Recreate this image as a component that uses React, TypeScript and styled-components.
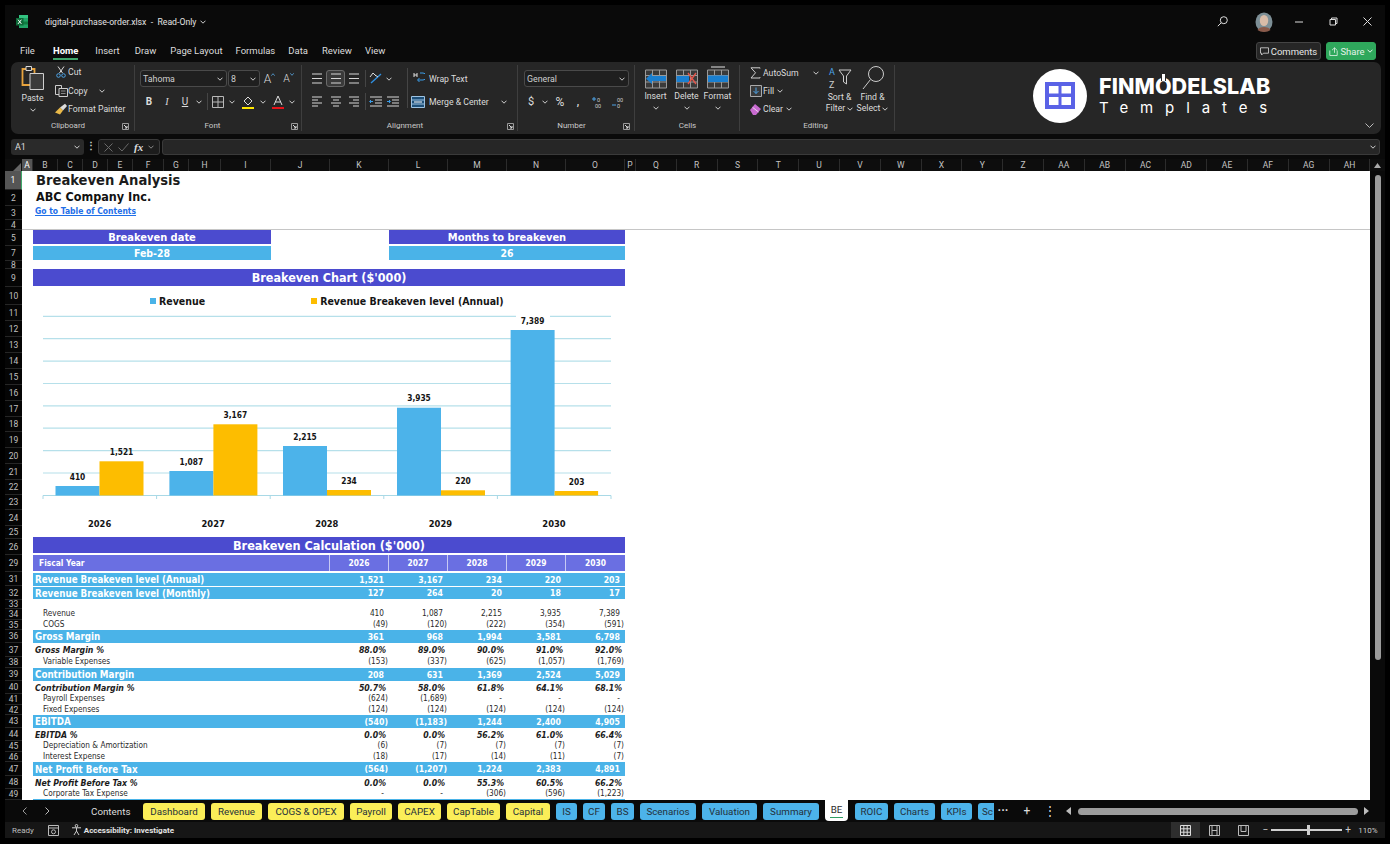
import React from "react";
import styled, { createGlobalStyle } from "styled-components";

const UI = `Roboto, "Noto Sans", sans-serif`;
const SHEET = `"DejaVu Sans Condensed", "DejaVu Sans", "Noto Sans", sans-serif`;
const LINE = "#d6d6d6";

const Global = createGlobalStyle`
  html, body { margin: 0; padding: 0; background: #000; overflow: hidden; }
  * { box-sizing: border-box; }
`;

const Frame = styled.div`
  width: 1390px; height: 844px; background: #000; padding: 5px 5px 6px;
  font-family: ${UI}; color: #e4e4e4; overflow: hidden;
`;
const Win = styled.div`
  height: 833px; background: #0a0a0a; display: flex; flex-direction: column;
`;

/* title bar */
const TitleBar = styled.header`
  height: 35px; display: flex; align-items: center; padding: 0 0 2px 11px; flex: none;
`;
const FileName = styled.span`
  margin-left: 17px; font-size: 8.7px; color: #e2e2e2; display: flex; align-items: center; gap: 4px;
`;
const TitleRight = styled.div`
  margin-left: auto; display: flex; align-items: center;
`;
const WinBtn = styled.span<{ $w: number }>`
  width: ${(p) => p.$w}px; display: flex; justify-content: center; align-items: center;
`;

/* menu */
const MenuBar = styled.nav`
  height: 22px; display: flex; align-items: center; padding-left: 15px; flex: none;
`;
const MenuItem = styled.span<{ $active?: boolean; $gap: number }>`
  font-size: 9.5px; margin-right: ${(p) => p.$gap}px; position: relative; height: 18px; line-height: 18px;
  font-weight: ${(p) => (p.$active ? 700 : 400)}; color: ${(p) => (p.$active ? "#fff" : "#dcdcdc")};
  border-bottom: ${(p) => (p.$active ? "2px solid #3fa76a" : "none")};
`;
const MenuRight = styled.div`
  margin-left: auto; display: flex; gap: 5px; padding-right: 9px;
`;
const CommentBtn = styled.button`
  width: 65px; height: 18px; background: #262626; border: 1px solid #444; border-radius: 3px; color: #e6e6e6;
  font: 9.5px ${UI}; display: flex; align-items: center; justify-content: center; gap: 2px; padding: 0;
`;
const ShareBtn = styled(CommentBtn)`
  width: 50px; background: #2fa85c; border-color: #2fa85c; color: #e4f3e9;
`;

/* ribbon */
const Ribbon = styled.section`
  height: 72px; margin: 0 4px 0 6px; background: #262626; border-radius: 7px; display: flex; flex: none;
`;
const Group = styled.div<{ $w: number }>`
  width: ${(p) => p.$w}px; flex: none; display: flex; flex-direction: column; position: relative;
  &::after { content: ""; position: absolute; right: 0; top: 3px; bottom: 3px; width: 1px; background: #3e3e3e; }
`;
const GroupBody = styled.div<{ $pl?: number; $pt?: number }>`
  height: 56px; display: flex; padding-left: ${(p) => p.$pl ?? 0}px; padding-top: ${(p) => p.$pt ?? 0}px;
`;
const GroupFoot = styled.div<{ $pr: number }>`
  height: 16px; display: grid; grid-template-columns: 1fr auto 1fr; align-items: center; padding-right: ${(p) => p.$pr}px;
  font-size: 8px; color: #c9c9c9; text-align: center; line-height: 14px;
`;
const Launcher = styled.span<{ $off: number }>`
  justify-self: end; margin-right: ${(p) => -p.$off}px; display: flex;
`;
const Col = styled.div<{ $w?: number; $gap?: number }>`
  display: flex; flex-direction: column; ${(p) => (p.$w ? `width:${p.$w}px;` : "")} gap: ${(p) => p.$gap ?? 0}px; flex: none;
`;
const Row = styled.div<{ $gap?: number }>`
  display: flex; align-items: center; height: 17px; gap: ${(p) => p.$gap ?? 0}px;
`;
const Cell = styled.span<{ $w: number; $on?: boolean; $fs?: number }>`
  width: ${(p) => p.$w}px; height: 17px; display: flex; align-items: center; justify-content: center; flex: none;
  font-size: ${(p) => p.$fs ?? 10}px; color: #dcdcdc;
  ${(p) => (p.$on ? "border:1px solid #6a6a6a;border-radius:3px;background:#3a3a3a;" : "")}
`;
const ItalicI = styled.i`
  font-family: "Liberation Serif", serif;
`;
const Sep = styled.span<{ $w: number; $h?: number }>`
  width: ${(p) => p.$w}px; height: ${(p) => p.$h ?? 17}px; flex: none; position: relative;
  &::after { content: ""; position: absolute; left: 50%; top: 0; bottom: 0; width: 1px; background: #454545; }
`;
const TallSep = styled(Sep)`
  margin-top: -2px;
`;
const Select = styled.span<{ $w: number }>`
  width: ${(p) => p.$w}px; height: 17px; border: 1px solid #4a4a4a; border-radius: 3px; background: #1f1f1f;
  display: flex; align-items: center; justify-content: space-between; padding: 0 3px 0 2px; font-size: 8.8px; color: #cfcfcf; flex: none;
`;
const ListItem = styled.span<{ $h?: number }>`
  height: ${(p) => p.$h ?? 18.5}px; display: flex; align-items: center; font-size: 8.7px; color: #dcdcdc; white-space: nowrap;
`;
const ListIcon = styled.span<{ $w: number }>`
  width: ${(p) => p.$w}px; display: flex; justify-content: center; flex: none;
`;
const ListChev = styled.span<{ $ml: number }>`
  margin-left: ${(p) => p.$ml}px; display: flex;
`;
const BigBtn = styled.div<{ $w: number }>`
  width: ${(p) => p.$w}px; display: flex; flex-direction: column; align-items: center; font-size: 8.7px; line-height: 11px;
  color: #dcdcdc; text-align: center; flex: none; white-space: nowrap;
`;
const BigIcon = styled.div<{ $h: number }>`
  height: ${(p) => p.$h}px; display: flex; align-items: center; justify-content: center;
`;
const Inline = styled.span`
  display: flex; align-items: center; gap: 2px;
`;
const GrowA = styled.span`
  font-size: 12px; font-weight: 300; display: flex; align-items: flex-start; line-height: 12px;
`;
const ShrinkA = styled(GrowA)`
  font-size: 10.5px;
`;
const LogoArea = styled.div`
  flex: 1; display: flex; align-items: center; padding-left: 138px; position: relative;
`;
const LogoCircle = styled.div`
  width: 54px; height: 54px; border-radius: 50%; background: #fff; display: flex; align-items: center; justify-content: center; flex: none; margin-top: -5px;
`;
const LogoText = styled.div`
  margin-left: 12px; margin-top: -3px; color: #fff; display: flex; flex-direction: column;
`;
const LogoTop = styled.span`
  font: 800 21.5px/22px Inter, "Noto Sans", sans-serif; letter-spacing: 0.1px; white-space: nowrap;
`;
const PowerO = styled.span`
  position: relative; display: inline-block;
  &::after { content: ""; position: absolute; left: 50%; top: -1px; width: 3px; height: 7px; margin-left: -2.5px; background: #fff; border: 1px solid #262626; border-width: 0 1px; box-sizing: content-box; }
`;
const LogoSub = styled.span`
  font: 400 15px/21px Inter, "Noto Sans", sans-serif; letter-spacing: 11.9px; white-space: nowrap;
`;
const RibbonEnd = styled.span`
  align-self: flex-end; margin: 0 7px 6px 0; display: flex;
`;

/* formula */
const FormulaBar = styled.div`
  height: 16px; margin: 5px 5px 0 6px; display: flex; align-items: stretch; flex: none;
`;
const NameBox = styled.div`
  width: 73px; background: #2a2a2a; border-radius: 3px; display: flex; align-items: center; justify-content: space-between;
  padding: 0 4px; font-size: 9px; color: #ddd;
`;
const Dots = styled.span`
  width: 14px; text-align: center; font-size: 10px; line-height: 14px; color: #ccc; font-weight: 700;
`;
const FormulaBtns = styled.div`
  width: 62px; border: 1px solid #3a3a3a; border-radius: 3px; background: #1c1c1c; display: flex; align-items: center; justify-content: space-around; padding: 0 2px;
`;
const FxLabel = styled.span`
  font: italic 700 11px "Liberation Serif", serif; color: #ddd;
`;
const FormulaInput = styled.div`
  flex: 1; margin-left: 2px; background: #262626; border-radius: 3px; border: 1px solid #3a3a3a; display: flex; align-items: center; justify-content: flex-end; padding-right: 3px;
`;

/* grid */
const ColHeads = styled.div`
  height: 12px; margin-top: 4px; display: flex; flex: none; background: #0d0d0d;
`;
const Corner = styled.div`
  width: 17px; display: flex; align-items: flex-end; justify-content: flex-end; flex: none; padding-right: 1px;
`;
const ColHead = styled.span<{ $w: number; $on?: boolean }>`
  width: ${(p) => p.$w}px; flex: none; text-align: center; font-size: 8.5px; line-height: 12px; color: ${(p) => (p.$on ? "#fff" : "#c4c4c4")};
  background: ${(p) => (p.$on ? "#555" : "transparent")}; border-right: 1px solid #2c2c2c;
`;
const ScrollTop = styled.span`
  width: 15px; flex: none; display: flex; align-items: center; justify-content: center;
`;
const Body = styled.div`
  height: 629px; display: flex; flex: none; overflow: hidden;
`;
const RowHeads = styled.div`
  width: 17px; flex: none; background: #000; display: flex; flex-direction: column;
`;
const RowHead = styled.span<{ $h: number; $on?: boolean }>`
  height: ${(p) => p.$h}px; flex: none; font-size: 8.5px; line-height: ${(p) => p.$h}px; text-align: center; color: ${(p) => (p.$on ? "#fff" : "#c0c0c0")};
  background: ${(p) => (p.$on ? "#555" : "#050505")}; border-bottom: 1px solid #262626;
  ${(p) => (p.$on ? "border-right:1px solid #3fa76a;" : "")}
`;
const Sheet = styled.main`
  width: 1348px; flex: none; background: #fff; font-family: ${SHEET}; font-stretch: condensed; color: #111; overflow: hidden;
`;
const VScroll = styled.aside`
  width: 15px; flex: none; background: #0a0a0a; display: flex; justify-content: center; padding-top: 4px;
`;
const VThumb = styled.span`
  width: 6px; height: 485px; background: #9c9c9c; border-radius: 3px;
`;
const Head = styled.div`
  height: 59px; padding: 0 0 0 14px; border-bottom: 1px solid #c6c6c6;
`;
const H1 = styled.div`
  font-weight: 700; font-size: 14.6px; line-height: 18px; color: #1c1c1c;
`;
const H2 = styled.div`
  font-weight: 700; font-size: 12.5px; line-height: 16px; color: #111;
`;
const TocLink = styled.a`
  font-weight: 700; font-size: 8.5px; line-height: 13px; color: #1f6fe8; text-decoration: underline; margin-left: -1px; display: block;
`;
const Content = styled.div`
  width: 592px; margin-left: 11px; display: flex; flex-direction: column;
`;
const KpiRow = styled.div`
  display: grid; grid-template-columns: 238px 118px 236px; height: 30px;
`;
const Kpi = styled.div`
  display: flex; flex-direction: column; gap: 2px;
`;
const Bar = styled.div<{ $bg: string; $h: number; $fs: number }>`
  height: ${(p) => p.$h}px; background: ${(p) => p.$bg}; color: #fff; font-weight: 700; font-size: ${(p) => p.$fs}px;
  line-height: ${(p) => p.$h + 1}px; text-align: center;
`;
const ChartTitle = styled(Bar)`
  margin-top: 9px;
`;
const Legend = styled.div`
  height: 19px; padding: 11px 0 0 117px; display: flex; align-items: center; font-weight: 700; font-size: 10.5px; color: #151515;
`;
const LegendItem = styled.span<{ $c: string; $mr: number }>`
  display: flex; align-items: center; gap: 3px; margin-right: ${(p) => p.$mr}px; white-space: nowrap;
  &::before { content: ""; width: 6px; height: 6px; background: ${(p) => p.$c}; }
`;
const ChartSvg = styled.svg`
  display: block;
`;
const Calc = styled.div`
  margin-top: 7px; display: flex; flex-direction: column;
`;
const Grid = styled.div<{ $h: number; $mt?: number; $bg?: string }>`
  display: grid; grid-template-columns: 297px repeat(5, 59px); height: ${(p) => p.$h}px; align-items: center;
  margin-top: ${(p) => p.$mt ?? 0}px; background: ${(p) => p.$bg ?? "transparent"};
`;
const FyLabel = styled.span`
  font-weight: 700; font-size: 8.4px; color: #fff; padding-left: 6px; border-right: 1px solid #c7c9f4; line-height: 16px;
`;
const FyYear = styled.span`
  font-weight: 700; font-size: 8.4px; color: #fff; text-align: center; border-right: 1px solid #c7c9f4; line-height: 16px;
  &:last-child { border-right: none; }
`;
const Label = styled.span<{ $kind: Kind }>`
  white-space: nowrap;
  ${(p) =>
    p.$kind === "band"
      ? "font-weight:700;font-size:9.7px;color:#fff;padding-left:2px;"
      : p.$kind === "pct"
      ? "font-weight:700;font-style:italic;font-size:8.7px;color:#1c1c1c;padding-left:2px;"
      : "font-size:8.2px;line-height:9px;color:#2a2a2a;padding:0 0 2px 10px;"}
`;
const Val = styled.span<{ $kind: Kind; $neg: boolean }>`
  text-align: right; white-space: nowrap;
  padding-right: ${(p) => (p.$neg ? 1 : p.$kind === "pct" ? 3 : 5)}px;
  ${(p) =>
    p.$kind === "band"
      ? "font-weight:700;font-size:8.7px;color:#fff;"
      : p.$kind === "pct"
      ? "font-weight:700;font-style:italic;font-size:8.7px;color:#1c1c1c;"
      : "font-size:8.2px;line-height:9px;padding-bottom:2px;color:#2a2a2a;"}
`;

/* sheet tabs */
const TabBar = styled.div`
  height: 22px; display: flex; align-items: center; flex: none; padding-left: 8px;
`;
const TabNav = styled.span`
  width: 23px; display: flex; justify-content: center; flex: none;
`;
const TabStrip = styled.div`
  width: 903px; display: flex; gap: 6px; overflow: hidden; align-items: flex-start; height: 22px; flex: none; margin-left: 32px;
`;
const Tab = styled.span<{ $w: number; $c: string }>`
  width: ${(p) => p.$w}px; height: 17px; margin-top: 3px; flex: none; background: ${(p) => p.$c}; color: #24303a; font-size: 9.8px; line-height: 18px;
  text-align: center; border-radius: 3px; white-space: nowrap; overflow: hidden;
`;
const PlainTab = styled(Tab)`
  color: #dcdcdc; text-align: left;
`;
const CutTab = styled(Tab)`
  text-align: left; padding-left: 4px; border-radius: 3px 0 0 3px;
`;
const ActiveTab = styled.span`
  width: 23px; height: 21px; margin-right: 1px; flex: none; background: #fff; color: #2c2c2c; font-size: 9.8px; line-height: 20px;
  text-align: center; border-radius: 0 0 4px 4px; position: relative;
  &::after { content: ""; position: absolute; left: 5px; right: 5px; bottom: 3px; height: 1.5px; background: #2f9e63; }
`;
const TabTools = styled.div`
  display: flex; align-items: center; color: #ddd; flex: none;
`;
const Tool = styled.span<{ $w: number }>`
  width: ${(p) => p.$w}px; display: flex; justify-content: center; align-items: center; font-size: 12px; line-height: 12px;
`;
const HScroll = styled.span`
  width: 280px; height: 7px; border-radius: 4px; background: #9c9c9c; flex: none;
`;

/* status */
const Status = styled.footer`
  height: 16px; background: #161616; display: flex; align-items: center; padding-left: 7px; font-size: 8px; color: #bdbdbd; flex: none;
`;
const StatusIcon = styled.span<{ $ml: number }>`
  margin-left: ${(p) => p.$ml}px; display: flex;
`;
const Access = styled.span`
  margin-left: 2px; font-weight: 700; color: #e4e4e4; font-size: 8px;
`;
const StatusRight = styled.div`
  margin-left: auto; display: flex; align-items: center; height: 16px;
`;
const ViewBtn = styled.span<{ $on?: boolean }>`
  width: 29px; height: 16px; display: flex; align-items: center; justify-content: center; background: ${(p) => (p.$on ? "#2e2e2e" : "transparent")};
`;
const Zoom = styled.div`
  display: flex; align-items: center; margin-left: 5px; gap: 3px; font-size: 10px; color: #ccc; line-height: 10px;
`;
const Slider = styled.span`
  width: 71px; height: 1.5px; background: #cfcfcf; position: relative; display: block;
  &::after { content: ""; position: absolute; left: 36px; top: -4px; width: 3px; height: 10px; background: #cfcfcf; }
`;
const Pct = styled.span`
  width: 34px; text-align: center; font-size: 8px; color: #ccc;
`;

/* icons */
const Chev = ({ c = "#cfcfcf" }: { c?: string }) => (
  <svg width="6" height="4" viewBox="0 0 6 4"><path d="M.5.7 3 3.2 5.5.7" fill="none" stroke={c} strokeWidth="1" /></svg>
);
const Launch = () => (
  <svg width="7" height="7" viewBox="0 0 7 7"><path d="M.5.5h6v6h-6z" fill="none" stroke="#9a9a9a" /><path d="M2 2l3 3M5 3v2H3" fill="none" stroke="#ddd" /></svg>
);
const Lines = ({ rows, w = 14 }: { rows: [number, number][]; w?: number }) => (
  <svg width={w} height="11" viewBox={`0 0 ${w} 11`}>
    {rows.map(([a, b], i) => (
      <path key={i} d={`M${a} ${1 + i * (9 / (rows.length - 1))}H${b}`} stroke={LINE} strokeWidth="1" />
    ))}
  </svg>
);
const TableIcon = ({ mode }: { mode: "ins" | "del" | "fmt" }) => (
  <svg width="24" height="24" viewBox="0 0 24 24">
    <path d="M1.5 4h21v18h-21z" fill="#3a3a3a" stroke="#9a9a9a" />
    <path d="M1.5 9.5h21M1.5 16h21M8.5 4v18M15.5 4v18" stroke="#9a9a9a" />
    {mode === "fmt" && <path d="M5 1h14" stroke="#c6c6c6" strokeWidth="1.2" />}
    {mode === "fmt" && <path d="M2 9.5h20v6.5H2z" fill="#1a7fd0" />}
    {mode === "ins" && <path d="M22 10H8V7l-6 5.7 6 5.3v-3h14z" fill="#1a7fd0" />}
    {mode === "del" && <path d="M1.5 10H14v6H1.5z" fill="#1a7fd0" />}
    {mode === "del" && <path d="M13 7l8 11M21 7l-8 11" stroke="#e2574c" strokeWidth="1.4" />}
  </svg>
);

type Kind = "band" | "pct" | "plain";
const rowHeads: [string, number][] = [
  ["1", 19], ["2", 16], ["3", 14], ["4", 10], ["5", 16], ["7", 15], ["8", 8], ["9", 18], ["10", 18],
  ["11", 16], ["12", 16], ["13", 16], ["14", 16], ["15", 16], ["16", 16], ["17", 16], ["18", 15], ["19", 16], ["20", 16], ["21", 16], ["22", 15], ["23", 15], ["24", 16],
  ["25", 13], ["26", 16], ["29", 17], ["31", 14], ["32", 14], ["33", 9], ["34", 11], ["35", 10], ["36", 13], ["37", 14], ["38", 11], ["39", 13],
  ["40", 13], ["41", 11], ["42", 10], ["43", 13], ["44", 13], ["45", 11], ["46", 10], ["47", 14], ["48", 13], ["49", 11],
];
const cols: [string, number][] = [
  ["B", 25], ["C", 25], ["D", 25], ["E", 25], ["F", 31], ["G", 25], ["H", 32], ["I", 50], ["J", 59], ["K", 59], ["L", 59], ["M", 59], ["N", 59], ["O", 59], ["P", 11],
  ...["Q", "R", "S", "T", "U", "V", "W", "X", "Y", "Z", "AA", "AB", "AC", "AD", "AE", "AF", "AG", "AH"].map((c) => [c, 40.8] as [string, number]),
];
const rows: { k: Kind; h: number; l: string; v: string[]; mt?: number }[] = [
  { k: "band", h: 13, mt: 2, l: "Revenue Breakeven level (Annual)", v: ["1,521", "3,167", "234", "220", "203"] },
  { k: "band", h: 12, mt: 1, l: "Revenue Breakeven level (Monthly)", v: ["127", "264", "20", "18", "17"] },
  { k: "plain", h: 11, mt: 10, l: "Revenue", v: ["410", "1,087", "2,215", "3,935", "7,389"] },
  { k: "plain", h: 10, l: "COGS", v: ["(49)", "(120)", "(222)", "(354)", "(591)"] },
  { k: "band", h: 13, l: "Gross Margin", v: ["361", "968", "1,994", "3,581", "6,798"] },
  { k: "pct", h: 14, l: "Gross Margin %", v: ["88.0%", "89.0%", "90.0%", "91.0%", "92.0%"] },
  { k: "plain", h: 11, l: "Variable Expenses", v: ["(153)", "(337)", "(625)", "(1,057)", "(1,769)"] },
  { k: "band", h: 13, l: "Contribution Margin", v: ["208", "631", "1,369", "2,524", "5,029"] },
  { k: "pct", h: 13, l: "Contribution Margin %", v: ["50.7%", "58.0%", "61.8%", "64.1%", "68.1%"] },
  { k: "plain", h: 11, l: "Payroll Expenses", v: ["(624)", "(1,689)", "-", "-", "-"] },
  { k: "plain", h: 10, l: "Fixed Expenses", v: ["(124)", "(124)", "(124)", "(124)", "(124)"] },
  { k: "band", h: 13, l: "EBITDA", v: ["(540)", "(1,183)", "1,244", "2,400", "4,905"] },
  { k: "pct", h: 13, l: "EBITDA %", v: ["0.0%", "0.0%", "56.2%", "61.0%", "66.4%"] },
  { k: "plain", h: 11, l: "Depreciation & Amortization", v: ["(6)", "(7)", "(7)", "(7)", "(7)"] },
  { k: "plain", h: 10, l: "Interest Expense", v: ["(18)", "(17)", "(14)", "(11)", "(7)"] },
  { k: "band", h: 14, l: "Net Profit Before Tax", v: ["(564)", "(1,207)", "1,224", "2,383", "4,891"] },
  { k: "pct", h: 13, l: "Net Profit Before Tax %", v: ["0.0%", "0.0%", "55.3%", "60.5%", "66.2%"] },
  { k: "plain", h: 10, l: "Corporate Tax Expense", v: ["-", "-", "(306)", "(596)", "(1,223)"] },
];
const YELLOW = "#fbee58";
const BLUE = "#4cb3ea";
const tabs: [string, number, string][] = [
  ["Dashboard", 62, YELLOW], ["Revenue", 51, YELLOW], ["COGS & OPEX", 76, YELLOW], ["Payroll", 42, YELLOW], ["CAPEX", 43, YELLOW], ["CapTable", 53, YELLOW], ["Capital", 44, YELLOW],
  ["IS", 21, BLUE], ["CF", 22, BLUE], ["BS", 23, BLUE], ["Scenarios", 56, BLUE], ["Valuation", 55, BLUE], ["Summary", 56, BLUE],
];
const tabs2: [string, number, string][] = [["ROIC", 33, BLUE], ["Charts", 41, BLUE], ["KPIs", 31, BLUE]];

const X0 = 33;
const Y0 = 305;
const bars: { x: number; w: number; top: number; c: string; v: string; ly: number }[] = [
  { x: 55.5, w: 44, top: 486, c: BLUE, v: "410", ly: 477 },
  { x: 99.5, w: 44, top: 461.3, c: "#fdbd00", v: "1,521", ly: 452 },
  { x: 169.4, w: 44, top: 471, c: BLUE, v: "1,087", ly: 461.7 },
  { x: 213.4, w: 44, top: 424.3, c: "#fdbd00", v: "3,167", ly: 415 },
  { x: 283, w: 44, top: 446, c: BLUE, v: "2,215", ly: 436.7 },
  { x: 327, w: 44, top: 490, c: "#fdbd00", v: "234", ly: 480.7 },
  { x: 397, w: 44, top: 407.7, c: BLUE, v: "3,935", ly: 397.7 },
  { x: 441, w: 44, top: 490.3, c: "#fdbd00", v: "220", ly: 481 },
  { x: 510.6, w: 44, top: 330, c: BLUE, v: "7,389", ly: 320.7 },
  { x: 554.6, w: 43.5, top: 491, c: "#fdbd00", v: "203", ly: 481.7 },
];

const Chart = () => (
  <ChartSvg width="592" height="225" viewBox={`${X0} ${Y0} 592 225`}>
    {[316.3, 338.7, 361.2, 383.5, 405.8, 428.2, 450.6, 473].map((y) => (
      <line key={y} x1="43" x2="611" y1={y} y2={y} stroke="#b6e0ea" strokeWidth="1.2" />
    ))}
    <line x1="43" x2="611" y1="495.5" y2="495.5" stroke="#a9d9e6" strokeWidth="1.2" />
    {[43, 156.6, 270.2, 383.8, 497.4, 611].map((x) => (
      <line key={x} x1={x} x2={x} y1="495.5" y2="499" stroke="#a9d9e6" />
    ))}
    <rect x="516" y="312" width="34" height="9" fill="#fff" />
    {bars.map((b) => (
      <rect key={b.v} x={b.x} y={b.top} width={b.w} height={495.5 - b.top} fill={b.c} />
    ))}
    {bars.map((b) => (
      <text key={b.v} x={b.x + 22} y={b.ly + 3} textAnchor="middle" fontSize="8.3" fontWeight="700" fill="#141414">{b.v}</text>
    ))}
    {["2026", "2027", "2028", "2029", "2030"].map((t, i) => (
      <text key={t} x={99.6 + i * 113.6} y="527" textAnchor="middle" fontSize="9.3" fontWeight="700" fill="#141414">{t}</text>
    ))}
  </ChartSvg>
);

export default function App() {
  return (
    <Frame>
      <Global />
      <Win>
        <TitleBar>
          <svg width="12" height="13" viewBox="0 0 12 13">
            <path d="M3 0h9v13H3z" fill="#21a366" /><path d="M3 0h9v3H3z" fill="#33c481" /><path d="M7 6.5h5v3H7z" fill="#107c41" />
            <path d="M0 3h7.5v7.5H0z" fill="#0e6b39" /><path d="M2 4.7l3.4 4.2M5.4 4.7 2 8.9" stroke="#fff" strokeWidth="1" />
          </svg>
          <FileName>digital-purchase-order.xlsx &nbsp;-&nbsp; Read-Only <Chev /></FileName>
          <TitleRight>
            <WinBtn $w={32}>
              <svg width="11" height="11" viewBox="0 0 11 11"><circle cx="6.8" cy="4.2" r="3.5" fill="none" stroke="#ddd" /><path d="M4.2 6.8.8 10.2" stroke="#ddd" /></svg>
            </WinBtn>
            <WinBtn $w={51}>
              <svg width="18" height="20" viewBox="0 0 18 20">
                <ellipse cx="9" cy="10" rx="8.5" ry="9.5" fill="#7d8f96" />
                <ellipse cx="9" cy="8.5" rx="4.2" ry="5.5" fill="#d9bca8" />
                <path d="M2.5 18c1.5-4 11.5-4 13 0-3 2.6-10 2.6-13 0z" fill="#8a5a4a" />
              </svg>
            </WinBtn>
            <WinBtn $w={20}><svg width="8" height="2"><path d="M0 1h8" stroke="#ddd" /></svg></WinBtn>
            <WinBtn $w={48}>
              <svg width="9" height="9" viewBox="0 0 9 9"><path d="M1 2.5h5.5V8H1z" fill="none" stroke="#ddd" /><path d="M2.5 2.5V1H8v5.5H6.5" fill="none" stroke="#ddd" /></svg>
            </WinBtn>
            <WinBtn $w={20}>
              <svg width="9" height="9" viewBox="0 0 9 9"><path d="M.5.5l8 8M8.5.5l-8 8" stroke="#ddd" /></svg>
            </WinBtn>
            <WinBtn $w={8} />
          </TitleRight>
        </TitleBar>

        <MenuBar>
          <MenuItem $gap={18}>File</MenuItem>
          <MenuItem $gap={17} $active>Home</MenuItem>
          <MenuItem $gap={15}>Insert</MenuItem>
          <MenuItem $gap={14}>Draw</MenuItem>
          <MenuItem $gap={13}>Page Layout</MenuItem>
          <MenuItem $gap={13}>Formulas</MenuItem>
          <MenuItem $gap={14}>Data</MenuItem>
          <MenuItem $gap={13}>Review</MenuItem>
          <MenuItem $gap={0}>View</MenuItem>
          <MenuRight>
            <CommentBtn>
              <svg width="9" height="9" viewBox="0 0 9 9"><path d="M.5.8h8v5.4H3.4L1.6 8V6.2H.5z" fill="none" stroke="#ddd" strokeWidth=".8" /></svg>
              Comments
            </CommentBtn>
            <ShareBtn>
              <svg width="9" height="9" viewBox="0 0 9 9"><path d="M.8 3.5v5h7.4v-5M3 3.2 5.5.8M5.5.8 8 3.2M5.5.8v5" fill="none" stroke="#e4f3e9" strokeWidth=".8" /></svg>
              Share <Chev c="#e4f3e9" />
            </ShareBtn>
          </MenuRight>
        </MenuBar>

        <Ribbon>
          <Group $w={124}>
            <GroupBody>
              <BigBtn $w={43}>
                <BigIcon $h={31}>
                  <svg width="24" height="25" viewBox="0 0 24 25">
                    <path d="M1.5 4h12v16h-12z" fill="none" stroke="#e8a33d" strokeWidth="1.8" />
                    <path d="M5 1.5h5.5v4H5z" fill="#2a2a2a" stroke="#d8d8d8" />
                    <path d="M9 8.5h13.5v16H9z" fill="#3a3a3a" stroke="#cfcfcf" />
                  </svg>
                </BigIcon>
                <span>Paste</span>
                <BigIcon $h={12}><Chev /></BigIcon>
              </BigBtn>
              <Col>
                <ListItem $h={20}>
                  <ListIcon $w={14}>
                    <svg width="10" height="12" viewBox="0 0 10 12">
                      <path d="M2 .5 6.5 7M8 .5 3.5 7" stroke="#ddd" fill="none" />
                      <circle cx="2.5" cy="9.5" r="1.8" fill="none" stroke="#4da3e6" /><circle cx="7.5" cy="9.5" r="1.8" fill="none" stroke="#4da3e6" />
                    </svg>
                  </ListIcon>
                  Cut
                </ListItem>
                <ListItem $h={18}>
                  <ListIcon $w={14}>
                    <svg width="13" height="12" viewBox="0 0 13 12"><path d="M.5.5h6v9h-6z" fill="none" stroke="#ccc" /><path d="M4 3.5h8.5v8H4z" fill="#262626" stroke="#ccc" /><path d="M6 6h4.5M6 8.5h4.5" stroke="#888" /></svg>
                  </ListIcon>
                  Copy
                  <ListChev $ml={11}><Chev /></ListChev>
                </ListItem>
                <ListItem $h={19}>
                  <ListIcon $w={14}>
                    <svg width="14" height="12" viewBox="0 0 14 12">
                      <path d="M6 4.5 11 .8 13 3 9 7.5z" fill="#ddd" /><path d="M1 9.5 6 4.5l3 3-3 4z" fill="#e9b949" />
                    </svg>
                  </ListIcon>
                  Format Painter
                </ListItem>
              </Col>
            </GroupBody>
            <GroupFoot $pr={10}><span /><span>Clipboard</span><Launcher $off={4}><Launch /></Launcher></GroupFoot>
          </Group>

          <Group $w={167}>
            <GroupBody $pl={5} $pt={8}>
              <Col $gap={6}>
                <Row $gap={1}>
                  <Select $w={87}>Tahoma <Chev /></Select>
                  <Select $w={32}>8 <Chev /></Select>
                  <Cell $w={17}>
                    <GrowA>A<svg width="4" height="3" viewBox="0 0 4 3"><path d="M.3 2.7 2 .7l1.7 2" fill="none" stroke="#5aa9e6" strokeWidth=".8" /></svg></GrowA>
                  </Cell>
                  <Cell $w={19}>
                    <ShrinkA>A<svg width="4" height="3" viewBox="0 0 4 3"><path d="M.3.3 2 2.3l1.7-2" fill="none" stroke="#5aa9e6" strokeWidth=".8" /></svg></ShrinkA>
                  </Cell>
                </Row>
                <Row>
                  <Cell $w={18}><b>B</b></Cell>
                  <Cell $w={18}><ItalicI>I</ItalicI></Cell>
                  <Cell $w={18}><u>U</u></Cell>
                  <Cell $w={10}><Chev /></Cell>
                  <Sep $w={6} />
                  <Cell $w={15}>
                    <svg width="12" height="12" viewBox="0 0 12 12"><path d="M.5.5h11v11H.5zM6 .5v11M.5 6h11" fill="none" stroke="#b8b8b8" /></svg>
                  </Cell>
                  <Cell $w={14}><Chev /></Cell>
                  <Cell $w={18}>
                    <svg width="14" height="14" viewBox="0 0 14 14"><path d="M3 6 7 2l4 4-4 4z" fill="none" stroke="#ddd" /><path d="M1 12h12v2H1z" fill="#ffe600" /></svg>
                  </Cell>
                  <Cell $w={12}><Chev /></Cell>
                  <Cell $w={18}>
                    <svg width="14" height="14" viewBox="0 0 14 14"><path d="M3 10 7 1l4 9M4.5 7h5" fill="none" stroke="#ddd" /><path d="M1 12h12v2H1z" fill="#e8131a" /></svg>
                  </Cell>
                  <Cell $w={10}><Chev /></Cell>
                </Row>
              </Col>
            </GroupBody>
            <GroupFoot $pr={12}><span /><span>Font</span><Launcher $off={8}><Launch /></Launcher></GroupFoot>
          </Group>

          <Group $w={216}>
            <GroupBody $pl={6} $pt={8}>
              <Col $w={98} $gap={6}>
                <Row>
                  <Cell $w={18}><Lines rows={[[2, 12], [2, 12], [2, 12]]} /></Cell>
                  <Cell $w={19} $on><Lines rows={[[2, 12], [2, 12], [2, 12]]} /></Cell>
                  <Cell $w={18}><Lines rows={[[2, 12], [2, 12], [2, 12]]} /></Cell>
                  <Sep $w={4} />
                  <Cell $w={17}>
                    <svg width="14" height="13" viewBox="0 0 14 13"><path d="M2 11 12 2" stroke="#2f8fe0" strokeWidth="1.4" /><path d="M1 5l3-4 3 3M6 3l3 2" fill="none" stroke="#ddd" /></svg>
                  </Cell>
                  <Cell $w={9}><Chev /></Cell>
                </Row>
                <Row>
                  <Cell $w={18}><Lines rows={[[2, 12], [2, 8], [2, 12], [2, 8]]} /></Cell>
                  <Cell $w={19}><Lines rows={[[2, 12], [4, 10], [2, 12], [4, 10]]} /></Cell>
                  <Cell $w={18}><Lines rows={[[2, 12], [6, 12], [2, 12], [6, 12]]} /></Cell>
                  <Sep $w={4} />
                  <Cell $w={17}>
                    <svg width="14" height="11" viewBox="0 0 14 11"><path d="M1 1h12M6 4h7M6 7h7M1 10h12" stroke={LINE} /><path d="M4 5.5H1M2 4 .5 5.5 2 7" stroke="#3a9be6" fill="none" /></svg>
                  </Cell>
                  <Cell $w={18}>
                    <svg width="14" height="11" viewBox="0 0 14 11"><path d="M1 1h12M6 4h7M6 7h7M1 10h12" stroke={LINE} /><path d="M1 5.5h3M3 4l1.5 1.5L3 7" stroke="#3a9be6" fill="none" /></svg>
                  </Cell>
                </Row>
              </Col>
              <TallSep $w={1} $h={40} />
              <Col $gap={6}>
                <Row>
                  <Cell $w={22}>
                    <svg width="13" height="13" viewBox="0 0 13 13"><path d="M2 5V1M5 5V1M2 3h3" stroke="#ddd" fill="none" /><path d="M8 1h3a2 2 0 0 1 0 7H6M7.5 6 5.5 8l2 2" stroke="#3a9be6" fill="none" /></svg>
                  </Cell>
                  <ListItem>Wrap Text</ListItem>
                </Row>
                <Row>
                  <Cell $w={22}>
                    <svg width="14" height="12" viewBox="0 0 14 12"><path d="M.5.5h13v11H.5z" fill="#1d4f78" stroke="#9dc3e3" /><path d="M.5 4h13M.5 8h13" stroke="#9dc3e3" /><path d="M3 6h8" stroke="#fff" /></svg>
                  </Cell>
                  <ListItem>Merge &amp; Center</ListItem>
                  <Cell $w={30}><Chev /></Cell>
                </Row>
              </Col>
            </GroupBody>
            <GroupFoot $pr={10}><span /><span>Alignment</span><Launcher $off={6}><Launch /></Launcher></GroupFoot>
          </Group>

          <Group $w={117}>
            <GroupBody $pl={6} $pt={8}>
              <Col $gap={6}>
                <Select $w={105}>General <Chev /></Select>
                <Row>
                  <Cell $w={14} $fs={11}>$</Cell>
                  <Cell $w={13}><Chev /></Cell>
                  <Cell $w={18} $fs={12}>%</Cell>
                  <Cell $w={18}><b>,</b></Cell>
                  <Cell $w={21}>
                    <svg width="14" height="12" viewBox="0 0 14 12"><path d="M1 3h4M3 1v4" stroke="#4da3e6" /><text x="6" y="5.5" fontSize="5.5" fill="#ccc">0</text><text x="4" y="11.5" fontSize="5.5" fill="#ccc">00</text></svg>
                  </Cell>
                  <Cell $w={19}>
                    <svg width="14" height="12" viewBox="0 0 14 12"><path d="M1 9h4" stroke="#4da3e6" /><text x="6" y="5.5" fontSize="5.5" fill="#ccc">00</text><text x="6" y="11.5" fontSize="5.5" fill="#ccc">0</text></svg>
                  </Cell>
                </Row>
              </Col>
            </GroupBody>
            <GroupFoot $pr={10}><span /><span>Number</span><Launcher $off={5}><Launch /></Launcher></GroupFoot>
          </Group>

          <Group $w={105}>
            <GroupBody $pl={5} $pt={3}>
              <BigBtn $w={31}><BigIcon $h={26}><TableIcon mode="ins" /></BigIcon><span>Insert</span><BigIcon $h={12}><Chev /></BigIcon></BigBtn>
              <BigBtn $w={31}><BigIcon $h={26}><TableIcon mode="del" /></BigIcon><span>Delete</span><BigIcon $h={12}><Chev /></BigIcon></BigBtn>
              <BigBtn $w={31}><BigIcon $h={26}><TableIcon mode="fmt" /></BigIcon><span>Format</span><BigIcon $h={12}><Chev /></BigIcon></BigBtn>
            </GroupBody>
            <GroupFoot $pr={0}><span /><span>Cells</span><span /></GroupFoot>
          </Group>

          <Group $w={155}>
            <GroupBody $pl={8} $pt={2}>
              <Col $w={75}>
                <ListItem>
                  <ListIcon $w={15}>
                    <svg width="11" height="12" viewBox="0 0 11 12"><path d="M10 1.5V.8H1l4.5 5L1 11h9v-.8" fill="none" stroke="#cfcfcf" /></svg>
                  </ListIcon>
                  AutoSum
                  <ListChev $ml={14}><Chev /></ListChev>
                </ListItem>
                <ListItem>
                  <ListIcon $w={15}>
                    <svg width="12" height="12" viewBox="0 0 12 12"><path d="M.5.5h11v11H.5z" fill="#3a3a3a" stroke="#aaa" /><path d="M6 2.5v6M3.5 6 6 8.5 8.5 6" stroke="#4da3e6" fill="none" /></svg>
                  </ListIcon>
                  Fill
                  <ListChev $ml={3}><Chev /></ListChev>
                </ListItem>
                <ListItem>
                  <ListIcon $w={15}>
                    <svg width="13" height="12" viewBox="0 0 13 12"><path d="M1 7l5-6 6 5-5 6H4z" fill="#c86ad0" /><path d="M3.5 4.3 9.5 9" stroke="#ecd6ee" /></svg>
                  </ListIcon>
                  Clear
                  <ListChev $ml={3}><Chev /></ListChev>
                </ListItem>
              </Col>
              <BigBtn $w={33}>
                <BigIcon $h={28}>
                  <svg width="24" height="24" viewBox="0 0 24 24"><text x="1" y="9" fontSize="9" fill="#4da3e6">A</text><text x="1" y="22" fontSize="9" fill="#ccc">Z</text><path d="M11 4h12l-4.5 6v8l-3-2v-6z" fill="none" stroke="#ccc" /></svg>
                </BigIcon>
                <span>Sort &amp;</span>
                <Inline>Filter <Chev /></Inline>
              </BigBtn>
              <BigBtn $w={33}>
                <BigIcon $h={28}>
                  <svg width="24" height="26" viewBox="0 0 24 26"><circle cx="15" cy="9" r="7.5" fill="none" stroke="#ccc" /><path d="M9.5 14.5 2 24" stroke="#ccc" /></svg>
                </BigIcon>
                <span>Find &amp;</span>
                <Inline>Select <Chev /></Inline>
              </BigBtn>
            </GroupBody>
            <GroupFoot $pr={4}><span /><span>Editing</span><span /></GroupFoot>
          </Group>

          <LogoArea>
            <LogoCircle>
              <svg width="30" height="27" viewBox="0 0 30 27">
                <path d="M0 0h30v27H0z" fill="#5a62e6" />
                <path d="M4 4h9.5v7.5H4zM16.5 4H26v7.5h-9.5zM4 15h9.5v8H4zM16.5 15H26v8h-9.5z" fill="#fff" />
              </svg>
            </LogoCircle>
            <LogoText>
              <LogoTop>FINM<PowerO>O</PowerO>DELSLAB</LogoTop>
              <LogoSub>Templates</LogoSub>
            </LogoText>
          </LogoArea>
          <RibbonEnd><svg width="9" height="5" viewBox="0 0 9 5"><path d="M.5.5 4.5 4.5 8.5.5" fill="none" stroke="#bbb" /></svg></RibbonEnd>
        </Ribbon>

        <FormulaBar>
          <NameBox>A1 <Chev /></NameBox>
          <Dots>⋮</Dots>
          <FormulaBtns>
            <svg width="9" height="9" viewBox="0 0 9 9"><path d="M.5.5l8 8M8.5.5l-8 8" stroke="#6a6a6a" /></svg>
            <svg width="11" height="9" viewBox="0 0 11 9"><path d="M.5 4.5 4 8l6.5-7.5" fill="none" stroke="#6a6a6a" /></svg>
            <FxLabel>fx</FxLabel>
            <Chev c="#888" />
          </FormulaBtns>
          <FormulaInput><Chev /></FormulaInput>
        </FormulaBar>

        <ColHeads>
          <Corner><svg width="8" height="8" viewBox="0 0 8 8"><path d="M8 0v8H0z" fill="#666" /></svg></Corner>
          <ColHead $w={11} $on>A</ColHead>
          {cols.map(([c, w]) => <ColHead key={c} $w={w}>{c}</ColHead>)}
          <ScrollTop><svg width="7" height="5" viewBox="0 0 7 5"><path d="M3.5 0 7 5H0z" fill="#aaa" /></svg></ScrollTop>
        </ColHeads>

        <Body>
          <RowHeads>
            {rowHeads.map(([n, h]) => <RowHead key={n} $h={h} $on={n === "1"}>{n}</RowHead>)}
          </RowHeads>
          <Sheet>
            <Head>
              <H1>Breakeven Analysis</H1>
              <H2>ABC Company Inc.</H2>
              <TocLink>Go to Table of Contents</TocLink>
            </Head>
            <Content>
              <KpiRow>
                <Kpi>
                  <Bar $bg="#4b4bcf" $h={14} $fs={11}>Breakeven date</Bar>
                  <Bar $bg="#4ab3e8" $h={14} $fs={10.4}>Feb-28</Bar>
                </Kpi>
                <span />
                <Kpi>
                  <Bar $bg="#4b4bcf" $h={14} $fs={11}>Months to breakeven</Bar>
                  <Bar $bg="#4ab3e8" $h={14} $fs={10.4}>26</Bar>
                </Kpi>
              </KpiRow>
              <ChartTitle $bg="#4b4bcf" $h={17} $fs={12.5}>Breakeven Chart ($'000)</ChartTitle>
              <Legend>
                <LegendItem $c="#4ab3e8" $mr={106}>Revenue</LegendItem>
                <LegendItem $c="#fdbd00" $mr={0}>Revenue Breakeven level (Annual)</LegendItem>
              </Legend>
              <Chart />
              <Calc>
                <Bar $bg="#4b4bcf" $h={16} $fs={12.6}>Breakeven Calculation ($'000)</Bar>
                <Grid $h={16} $mt={2} $bg="#6a6fe2">
                  <FyLabel>Fiscal Year</FyLabel>
                  {["2026", "2027", "2028", "2029", "2030"].map((y) => <FyYear key={y}>{y}</FyYear>)}
                </Grid>
                {rows.map((r) => (
                  <Grid key={r.l} $h={r.h} $mt={r.mt} $bg={r.k === "band" ? "#4ab3e8" : undefined}>
                    <Label $kind={r.k}>{r.l}</Label>
                    {r.v.map((v, i) => <Val key={i} $kind={r.k} $neg={v.startsWith("(")}>{v}</Val>)}
                  </Grid>
                ))}
                <Grid $h={4} $bg="#4ab3e8" />
              </Calc>
            </Content>
          </Sheet>
          <VScroll><VThumb /></VScroll>
        </Body>

        <TabBar>
          <TabNav><svg width="5" height="8" viewBox="0 0 5 8"><path d="M4.5.5 1 4l3.5 3.5" fill="none" stroke="#999" /></svg></TabNav>
          <TabNav><svg width="5" height="8" viewBox="0 0 5 8"><path d="M.5.5 4 4 .5 7.5" fill="none" stroke="#bbb" /></svg></TabNav>
          <TabStrip>
            <PlainTab $w={46} $c="transparent">Contents</PlainTab>
            {tabs.map(([t, w, c]) => <Tab key={t} $w={w} $c={c}>{t}</Tab>)}
            <ActiveTab>BE</ActiveTab>
            {tabs2.map(([t, w, c]) => <Tab key={t} $w={w} $c={c}>{t}</Tab>)}
            <CutTab $w={16} $c={BLUE}>Sc</CutTab>
          </TabStrip>
          <TabTools>
            <Tool $w={18}><b>···</b></Tool>
            <Tool $w={30}>+</Tool>
            <Tool $w={16}>⋮</Tool>
            <Tool $w={20}><svg width="5" height="8" viewBox="0 0 5 8"><path d="M5 0v8L0 4z" fill="#bbb" /></svg></Tool>
            <HScroll />
            <Tool $w={16}><svg width="5" height="8" viewBox="0 0 5 8"><path d="M0 0v8l5-4z" fill="#bbb" /></svg></Tool>
          </TabTools>
        </TabBar>

        <Status>
          <span>Ready</span>
          <StatusIcon $ml={14}>
            <svg width="11" height="11" viewBox="0 0 11 11"><path d="M.5.5h10v10H.5zM.5 3h10" fill="none" stroke="#bbb" /><circle cx="5.5" cy="6.8" r="2" fill="none" stroke="#bbb" /></svg>
          </StatusIcon>
          <StatusIcon $ml={12}>
            <svg width="11" height="12" viewBox="0 0 11 12"><circle cx="5.5" cy="1.8" r="1.3" fill="none" stroke="#ccc" /><path d="M1 3.8h9M5.5 4v3M5.5 7 3 11M5.5 7 8 11" fill="none" stroke="#ccc" /></svg>
          </StatusIcon>
          <Access>Accessibility: Investigate</Access>
          <StatusRight>
            <ViewBtn $on><svg width="11" height="11" viewBox="0 0 11 11"><path d="M.5.5h10v10H.5zM3.8.5v10M7.2.5v10M.5 3.8h10M.5 7.2h10" fill="none" stroke="#ddd" /></svg></ViewBtn>
            <ViewBtn><svg width="11" height="11" viewBox="0 0 11 11"><path d="M.5.5h10v10H.5zM3 .5v10M8 .5v10M3 5.5h5" fill="none" stroke="#bbb" /></svg></ViewBtn>
            <ViewBtn><svg width="11" height="11" viewBox="0 0 11 11"><path d="M.5.5h10v10H.5zM3 .5v6h5v-6" fill="none" stroke="#bbb" /></svg></ViewBtn>
            <Zoom>−<Slider />+</Zoom>
            <Pct>110%</Pct>
          </StatusRight>
        </Status>
      </Win>
    </Frame>
  );
}
